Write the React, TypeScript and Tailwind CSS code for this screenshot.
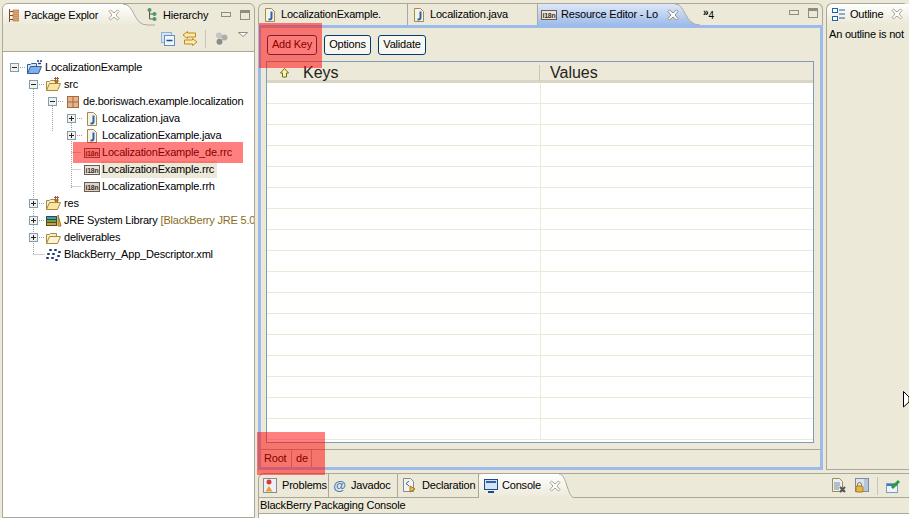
const FONT = "font-['Liberation_Sans',sans-serif] tracking-[-0.2px]"

function CloseX({ dim = false }: { dim?: boolean }) {
  return (
    <svg width="12" height="12" viewBox="0 0 12 12" className="shrink-0">
      <path
        d="M1 2.500L2.500 1 6 4 9.500 1 11 2.500 8 6l3 3.500L9.500 11 6 8l-3.500 3L1 9.500 4 6z"
        fill="#fff"
        stroke={dim ? '#a5a394' : '#8d8c7e'}
        strokeWidth="1"
      />
    </svg>
  )
}

function MinMax() {
  return (
    <div className="flex items-center gap-[9px]">
      <svg width="10" height="6" viewBox="0 0 10 6">
        <rect x="0.5" y="0.5" width="9" height="4" fill="#ece9d8" stroke="#8f8d7f" />
      </svg>
      <svg width="10" height="10" viewBox="0 0 10 10">
        <rect x="0.5" y="0.5" width="9" height="9" fill="#ece9d8" stroke="#8f8d7f" />
        <rect x="1" y="1" width="8" height="2" fill="#8f8d7f" />
      </svg>
    </div>
  )
}

function JavaFile() {
  return (
    <svg width="12" height="14" viewBox="0 0 12 14" className="shrink-0">
      <path d="M1.500.5h6l3 3v10h-9z" fill="#f6f3e6" stroke="#a58a50" />
      <path d="M7.500 3.500v6q0 2-2 2h-1" fill="none" stroke="#2a62ac" strokeWidth="2" />
    </svg>
  )
}

function I18n({ dim = false }: { dim?: boolean }) {
  return (
    <svg width="16" height="10" viewBox="0 0 16 10" className="shrink-0">
      <rect x="0.500" y="0.500" width="15" height="9" fill={dim ? '#d8d4cc' : '#e8e4dc'} stroke="#6d5b50" />
      <text x="8" y="7.500" textAnchor="middle" fontSize="7.500" fontWeight="700" fill="#3a2d28" textLength="13" lengthAdjust="spacingAndGlyphs">
        i18n
      </text>
    </svg>
  )
}

function Folder({ pkg = false, light = false }: { pkg?: boolean; light?: boolean }) {
  return (
    <svg width="17" height="15" viewBox="0 0 17 15" className="shrink-0">
      <path d="M1.500 13.500v-9h3l1-1h6v3" fill="#f8edc8" stroke="#a88a3c" />
      <path d="M1.500 13.500l3-7h11l-3 7z" fill={light ? '#fbf3d2' : '#fbe3a0'} stroke="#a88a3c" />
      {pkg && <path d="M9 1.500h5M9 4h5M10.500 0v6M12.500 0v6" stroke="#a0622c" fill="none" />}
    </svg>
  )
}

function Pack() {
  return (
    <svg width="12" height="12" viewBox="0 0 12 12" className="shrink-0">
      <rect x="0.500" y="0.500" width="11" height="11" fill="#e3b48e" stroke="#a8683c" />
      <path d="M6 1v10M1 6h10" stroke="#a8683c" />
    </svg>
  )
}

function Project() {
  return (
    <svg width="17" height="15" viewBox="0 0 17 15" className="shrink-0">
      <path d="M1.500 13.500v-9h3l1-1h5v3" fill="#d4e4f4" stroke="#2e5f9e" />
      <path d="M1.500 13.500l3-7h11l-3 7z" fill="#7fb0e6" stroke="#2e5f9e" />
      <path d="M11 1h2M14 1h2M12 3.500h3" stroke="#1d3f80" strokeWidth="1.500" />
    </svg>
  )
}

function Library() {
  return (
    <svg width="16" height="13" viewBox="0 0 16 13" className="shrink-0">
      <rect x="0.500" y="2.500" width="10" height="3" fill="#4f9ca8" stroke="#254d68" />
      <rect x="0.500" y="5.500" width="10" height="3" fill="#69a050" stroke="#2b5530" />
      <rect x="0.500" y="8.500" width="10" height="3" fill="#c9a040" stroke="#5f4a20" />
      <path d="M12 1l3 11h-3z" fill="#e8b840" stroke="#a07820" />
    </svg>
  )
}

function BlackBerry() {
  return (
    <svg width="15" height="12" viewBox="0 0 15 12" className="shrink-0" fill="#1d3a6e">
      <rect x="3" y="0" width="3" height="2" rx="1" />
      <rect x="8" y="0" width="3" height="2" rx="1" />
      <rect x="1" y="4" width="3" height="2" rx="1" />
      <rect x="6" y="4" width="3" height="2" rx="1" />
      <rect x="12" y="2" width="3" height="2" rx="1" />
      <rect x="11" y="6" width="3" height="2" rx="1" />
      <rect x="0" y="8" width="3" height="2" rx="1" />
      <rect x="5" y="8" width="3" height="2" rx="1" />
      <rect x="9" y="10" width="3" height="2" rx="1" />
    </svg>
  )
}

function Expander({ open }: { open: boolean }) {
  return (
    <svg width="9" height="9" viewBox="0 0 9 9" className="shrink-0">
      <rect x="0.500" y="0.500" width="8" height="8" fill="#f4f2e8" stroke="#7f9db9" />
      <path d="M2 4.500h5" stroke="#222" />
      {!open && <path d="M4.500 2v5" stroke="#222" />}
    </svg>
  )
}

interface TreeRow {
  x: number
  expander?: boolean
  open?: boolean
  icon: React.ReactNode
  label: string
  extra?: string
  selected?: boolean
}

const rows: TreeRow[] = [
  { x: 10, expander: true, open: true, icon: <Project />, label: 'LocalizationExample' },
  { x: 29, expander: true, open: true, icon: <Folder pkg />, label: 'src' },
  { x: 48, expander: true, open: true, icon: <Pack />, label: 'de.boriswach.example.localization' },
  { x: 67, expander: true, icon: <JavaFile />, label: 'Localization.java' },
  { x: 67, expander: true, icon: <JavaFile />, label: 'LocalizationExample.java' },
  { x: 67, icon: <I18n />, label: 'LocalizationExample_de.rrc' },
  { x: 67, icon: <I18n />, label: 'LocalizationExample.rrc', selected: true },
  { x: 67, icon: <I18n dim />, label: 'LocalizationExample.rrh' },
  { x: 29, expander: true, icon: <Folder pkg />, label: 'res' },
  { x: 29, expander: true, icon: <Library />, label: 'JRE System Library', extra: '[BlackBerry JRE 5.0' },
  { x: 29, expander: true, icon: <Folder light />, label: 'deliverables' },
  { x: 29, icon: <BlackBerry />, label: 'BlackBerry_App_Descriptor.xml' },
]

function Tree() {
  return (
    <div className="relative h-full overflow-hidden bg-white pt-[7px] text-[11px] text-black">
      <svg width="250" height="230" className="absolute left-0 top-0" fill="none" stroke="#a0a0a0" strokeDasharray="1 1">
        <path d="M17 15.500h6M30.500 29v173M36 32.500h6M49.500 46v34M55 49.500h6M68.500 63v74M74 66.500h6M74 83.500h6M68.500 100.500h10M68.500 117.500h10M68.500 134.500h10M36 151.500h6M36 168.500h6M36 185.500h6M30.500 202.500h12" />
      </svg>
      {rows.map((r) => (
        <div key={r.label} className="relative flex h-[17px] items-center" style={{ paddingLeft: r.x - 3 }}>
          <div className="flex w-[16px] shrink-0 items-center">{r.expander && <Expander open={!!r.open} />}</div>
          <div className="flex w-[17px] shrink-0 justify-center">{r.icon}</div>
          <span className={`ml-[1px] whitespace-nowrap pl-[1px] pr-[3px] ${r.selected ? 'bg-[#ece9d8]' : ''}`}>
            {r.label}
            {r.extra && <span className="ml-[3px] text-[#8b6b1e]">{r.extra}</span>}
          </span>
        </div>
      ))}
    </div>
  )
}

function LeftPane() {
  return (
    <div className="ml-[2px] flex h-full w-[253px] shrink-0 flex-col overflow-hidden rounded-t-[6px] border border-[#aca899]">
      <div className="relative flex h-[22px] shrink-0 items-center text-[11px]">
        <svg width="152" height="22" className="absolute left-0 top-0" viewBox="0 0 152 22">
          <defs>
            <linearGradient id="lt" x1="0" y1="0" x2="0" y2="1">
              <stop offset="0" stopColor="#ffffff" />
              <stop offset="1" stopColor="#ece9d8" />
            </linearGradient>
          </defs>
          <path d="M0 22V4Q0 0 6 0H120C132 0 130 21 144 21H152V22Z" fill="url(#lt)" />
          <path d="M120 0C132 0 130 21 144 21H250" fill="none" stroke="#aca899" />
        </svg>
        <div className="relative flex w-[144px] items-center pl-[6px]">
          <svg width="10" height="13" viewBox="0 0 10 13" className="shrink-0">
            <path d="M.5 0v13M0 2.500h4M0 6.500h4M0 10.500h4" fill="none" stroke="#7a4a20" />
            <rect x="4" y="1" width="6" height="3" fill="#e2a468" stroke="#a8683c" strokeWidth="0.600" />
            <rect x="4" y="5" width="6" height="3" fill="#e2a468" stroke="#a8683c" strokeWidth="0.600" />
            <rect x="4" y="9" width="6" height="3" fill="#e2a468" stroke="#a8683c" strokeWidth="0.600" />
          </svg>
          <span className="ml-[5px] whitespace-nowrap">Package Explor</span>
          <div className="ml-[10px]"><CloseX dim /></div>
        </div>
        <div className="relative flex items-center">
          <svg width="10" height="15" viewBox="0 0 10 15" className="shrink-0">
            <path d="M2.500 2v9h5M2.500 6h5" stroke="#556" fill="none" />
            <circle cx="2.500" cy="2" r="2" fill="#4e9a5e" />
            <circle cx="7.500" cy="6" r="2" fill="#4e9a5e" />
            <circle cx="7.500" cy="11" r="2" fill="#4e9a5e" />
          </svg>
          <span className="ml-[6px] whitespace-nowrap">Hierarchy</span>
        </div>
        <div className="relative ml-[13px]"><MinMax /></div>
      </div>
      <div className="flex h-[25px] shrink-0 items-center justify-end pr-[6px]">
        <svg width="14" height="14" viewBox="0 0 14 14" className="mr-[7px]">
          <rect x="0.500" y="0.500" width="10" height="10" fill="#d8e4f2" stroke="#8fb0d4" />
          <rect x="3.500" y="3.500" width="10" height="10" fill="#f2f6fb" stroke="#5f8fc4" />
          <path d="M5.500 8.500h6" stroke="#234e8a" strokeWidth="1.400" />
        </svg>
        <svg width="16" height="15" viewBox="0 0 16 15" className="mr-[7px]">
          <path d="M5.500.5L1 4l4.500 3.500V6h8V2h-8zM10.500 7.500L15 11l-4.500 3.500V13h-8V9h8z" fill="#fbe9ae" stroke="#c08a14" />
        </svg>
        <div className="mr-[9px] h-[18px] w-px bg-[#c8c5b4]" />
        <svg width="13" height="13" viewBox="0 0 13 13" className="mr-[10px]">
          <circle cx="4" cy="3.500" r="3" fill="#c4c4c0" />
          <circle cx="9.500" cy="5.500" r="3" fill="#aeaeaa" />
          <circle cx="4.500" cy="9.800" r="3" fill="#8c8c88" />
        </svg>
        <svg width="10" height="5" viewBox="0 0 10 5" className="mb-[9px]">
          <path d="M.5.500h9L5 4.500z" fill="#fff" stroke="#8f8d7f" />
        </svg>
      </div>
      <div className="min-h-0 flex-1 border-t border-[#aca899]">
        <Tree />
      </div>
    </div>
  )
}

function EditorTab({ icon, label, w }: { icon: React.ReactNode; label: string; w: string }) {
  return (
    <div className={`flex h-full shrink-0 items-center border-r border-[#aca899] pl-[5px] ${w}`}>
      {icon}
      <span className="ml-[5px] whitespace-nowrap">{label}</span>
    </div>
  )
}

function ToolButton({ children, w }: { children: string; w: string }) {
  return (
    <button className={`flex h-[20px] items-center justify-center rounded-[3px] border border-[#003c74] bg-[#f8f7f1] text-[11px] text-black ${w}`}>
      {children}
    </button>
  )
}

function ResourceGrid() {
  return (
    <div className="ml-[5px] mr-[6px] flex min-h-0 flex-1 flex-col overflow-hidden border border-[#7f9db9] bg-white">
      <div className="flex h-[21px] shrink-0 items-center border-b-[3px] border-[#d9d6c5] bg-[#ece9d8] pt-[3px] text-[16px] leading-none tracking-normal text-[#222]">
        <div className="flex w-[273px] shrink-0 items-center border-r border-[#c8c5b4] pl-[13px]">
          <svg width="9" height="10" viewBox="0 0 9 10" className="shrink-0">
            <path d="M4.500.5L8.500 5H6.500v4h-4V5H.500z" fill="#faf5a0" stroke="#6f6c20" />
          </svg>
          <span className="ml-[14px]">Keys</span>
        </div>
        <span className="ml-[10px]">Values</span>
      </div>
      <div className="flex-1">
        {Array.from({ length: 17 }).map((_, i) => (
          <div key={i} className="flex h-[21px] border-b border-[#ece9d8]">
            <div className="w-[274px] shrink-0 border-r border-[#ece9d8]" />
          </div>
        ))}
      </div>
    </div>
  )
}

function BottomTab({ icon, label, w }: { icon: React.ReactNode; label: string; w: string }) {
  return (
    <div className={`flex h-full shrink-0 items-center border-r border-[#aca899] pl-[4px] ${w}`}>
      {icon}
      <span className="ml-[5px] whitespace-nowrap">{label}</span>
    </div>
  )
}

function CenterPane() {
  return (
    <div className="flex h-full w-[565px] shrink-0 flex-col">
      <div className="relative flex h-[22px] shrink-0 items-center rounded-t-[6px] border-x border-t border-[#aca899] text-[11px]">
        <EditorTab icon={<JavaFile />} label="LocalizationExample." w="w-[149px]" />
        <EditorTab icon={<JavaFile />} label="Localization.java" w="w-[130px]" />
        <div className="relative flex h-full w-[165px] shrink-0 items-center pl-[3px]">
          <svg width="165" height="21" viewBox="0 0 165 21" className="absolute left-0 top-0">
            <defs>
              <linearGradient id="ct" x1="0" y1="0" x2="0" y2="1">
                <stop offset="0" stopColor="#dfe8f8" />
                <stop offset="1" stopColor="#9dbbea" />
              </linearGradient>
            </defs>
            <path d="M0 21V5Q0 0 6 0H137C148 0 146 21 162 21V21Z" fill="url(#ct)" />
            <path d="M137 0C148 0 146 21 162 21" fill="none" stroke="#aca899" />
          </svg>
          <div className="relative flex items-center">
            <I18n />
            <span className="ml-[4px] whitespace-nowrap">Resource Editor - Lo</span>
            <div className="ml-[9px]"><CloseX /></div>
          </div>
        </div>
        <div className="relative flex items-start leading-none">
          <span className="text-[10px] font-bold">»</span>
          <span className="mt-[3px] text-[10px]">4</span>
        </div>
        <div className="ml-auto mb-[3px] mr-[4px]"><MinMax /></div>
      </div>
      <div className="flex min-h-0 flex-1 flex-col border-[3px] border-[#9dbbea] bg-[#ece9d8]">
        <div className="flex h-[33px] shrink-0 items-center gap-[7px] px-[6px]">
          <ToolButton w="w-[50px]">Add Key</ToolButton>
          <ToolButton w="w-[47px]">Options</ToolButton>
          <ToolButton w="w-[48px]">Validate</ToolButton>
        </div>
        <ResourceGrid />
        <div className="mt-[6px] flex h-[18px] shrink-0 items-center border-t border-[#aca899] text-[11px]">
          <span className="flex h-full w-[31px] items-center border-r border-[#aca899] pl-[3px]">Root</span>
          <span className="flex h-full w-[20px] items-center border-r border-[#aca899] pl-[4px]">de</span>
        </div>
      </div>
    </div>
  )
}

function OutlinePane() {
  return (
    <div className="ml-[3px] flex h-full min-w-0 flex-1 flex-col rounded-t-[6px] border border-r-0 border-[#aca899] text-[11px]">
      <div className="flex h-[20px] shrink-0 items-center rounded-tl-[6px] bg-gradient-to-b from-white to-[#ece9d8] pl-[5px]">
        <svg width="13" height="13" viewBox="0 0 13 13" className="shrink-0" fill="#fff" stroke="#1f63ac">
          <rect x="0.500" y="0.500" width="5" height="4" />
          <rect x="0.500" y="8.500" width="5" height="4" />
          <path d="M7 2h6M7 6h6M7 10h6" />
        </svg>
        <span className="ml-[5px]">Outline</span>
        <div className="ml-[8px]"><CloseX dim /></div>
      </div>
      <div className="whitespace-nowrap pl-[2px] pt-[2px]">An outline is not</div>
    </div>
  )
}

function ConsolePane() {
  return (
    <div className="mt-[3px] flex min-h-0 flex-1 flex-col rounded-tl-[6px] border-l border-t border-[#aca899] text-[11px]">
      <div className="flex h-[24px] shrink-0 items-center border-b border-[#aca899]">
        <BottomTab
          w="w-[70px]"
          label="Problems"
          icon={
            <svg width="14" height="15" viewBox="0 0 14 15" className="shrink-0">
              <rect x="0.500" y="0.500" width="13" height="14" fill="#eef0f6" stroke="#8a8a90" />
              <circle cx="6" cy="4" r="2.500" fill="#d83a3a" />
              <path d="M6 8l3.500 5.500h-7z" fill="#e8a030" />
            </svg>
          }
        />
        <BottomTab
          w="w-[69px]"
          label="Javadoc"
          icon={<span className="w-[13px] shrink-0 text-center text-[13px] font-bold leading-none text-[#3f7fc0]">@</span>}
        />
        <BottomTab
          w="w-[81px]"
          label="Declaration"
          icon={
            <svg width="15" height="15" viewBox="0 0 15 15" className="shrink-0">
              <path d="M1.500.5h7l3 3v10h-10z" fill="#f5f3ea" stroke="#7f8a9a" />
              <path d="M7 3L4 5.500 7 8" fill="none" stroke="#2a62ac" />
              <path d="M8 8l5 3-5 3z" fill="#f0c050" stroke="#a07820" />
            </svg>
          }
        />
        <div className="relative flex h-full w-[96px] shrink-0 items-center pl-[5px]">
          <svg width="96" height="24" viewBox="0 0 96 24" className="absolute left-0 top-0">
            <defs>
              <linearGradient id="bt" x1="0" y1="0" x2="0" y2="1">
                <stop offset="0" stopColor="#ffffff" />
                <stop offset="1" stopColor="#ece9d8" />
              </linearGradient>
            </defs>
            <path d="M0 24V4Q0 0 5 0H80C88 0 88 24 96 24Z" fill="url(#bt)" />
            <path d="M80 0C88 0 88 24 96 24" fill="none" stroke="#aca899" />
          </svg>
          <svg width="14" height="14" viewBox="0 0 14 14" className="relative shrink-0">
            <rect x="0.500" y="0.500" width="13" height="10" fill="#d4e2f4" stroke="#1d4c8c" />
            <rect x="2" y="2" width="10" height="2" fill="#2a62ac" />
            <path d="M4 13h6" stroke="#1d4c8c" strokeWidth="2" />
          </svg>
          <span className="relative ml-[4px]">Console</span>
          <div className="relative ml-[8px]"><CloseX dim /></div>
        </div>
        <div className="ml-auto flex items-center gap-[8px] pr-[8px]">
          <svg width="15" height="15" viewBox="0 0 15 15">
            <path d="M.5.500h7l3 3v10H.500z" fill="#eef0f0" stroke="#a08c50" />
            <path d="M2 5h6M2 7h6M2 9h5M2 11h5" stroke="#6f8db0" />
            <path d="M8 9l5 5M13 9l-5 5" stroke="#555" strokeWidth="2" />
          </svg>
          <svg width="14" height="15" viewBox="0 0 14 15">
            <rect x="0.500" y="0.500" width="13" height="13" fill="#d8e4f2" stroke="#7f8a9a" />
            <rect x="9" y="1" width="4" height="12" fill="#b4c6dc" />
            <path d="M2.500 8V6.500a2 2 0 0 1 4 0V8" fill="none" stroke="#a07820" />
            <rect x="1" y="8" width="7" height="6" rx="1" fill="#e8b840" stroke="#a07820" />
          </svg>
          <div className="h-[18px] w-px bg-[#c8c5b4]" />
          <svg width="15" height="14" viewBox="0 0 15 14">
            <rect x="0.500" y="4.500" width="11" height="9" fill="#eef3f9" stroke="#7f9db9" />
            <rect x="1" y="5" width="10" height="2" fill="#3a7abf" />
            <path d="M6 9l7-7" stroke="#2e9a3c" strokeWidth="3" />
          </svg>
        </div>
      </div>
      <div className="flex h-[16px] shrink-0 items-center border-b border-[#aca899] pl-[1px]">BlackBerry Packaging Console</div>
      <div className="flex-1 bg-white" />
    </div>
  )
}

export default function App() {
  return (
    <div className={`relative flex h-[518px] w-[909px] overflow-hidden bg-[#ece9d8] pt-[3px] ${FONT}`}>
      <LeftPane />
      <div className="ml-[3px] flex min-w-0 flex-1 flex-col">
        <div className="flex h-[467px] shrink-0">
          <CenterPane />
          <OutlinePane />
        </div>
        <ConsolePane />
      </div>
      {/* mouse pointer caught in the screenshot */}
      <svg width="6" height="18" viewBox="0 0 6 18" className="absolute left-[903px] top-[391px]">
        <path d="M.5.500V16L6 11V6z" fill="#fff" stroke="#000" />
      </svg>
      {/* red callouts drawn over the screenshot */}
      <div className="pointer-events-none absolute left-[259px] top-[23px] h-[45px] w-[63px] bg-[#ff0000]/50" />
      <div className="pointer-events-none absolute left-[73px] top-[142px] h-[21px] w-[170px] bg-[#ff0000]/50" />
      <div className="pointer-events-none absolute left-[257px] top-[432px] h-[43px] w-[68px] bg-[#ff0000]/50" />
    </div>
  )
}
